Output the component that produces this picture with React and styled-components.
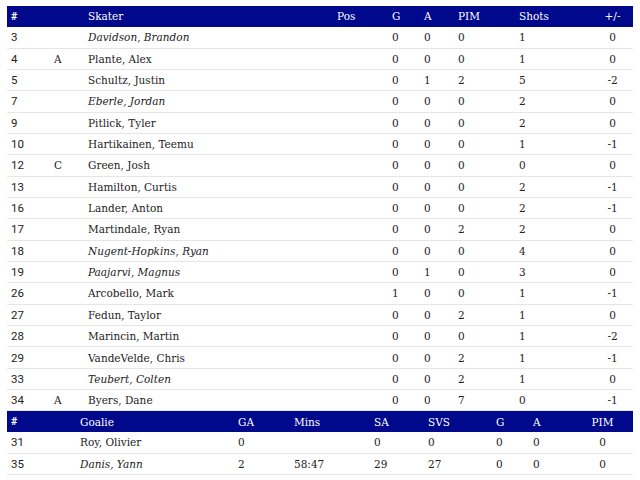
import React from "react";
import styled, { createGlobalStyle } from "styled-components";

const GlobalStyle = createGlobalStyle`
  body {
    margin: 0;
    padding: 6px 7px;
    background: #fff;
    font-family: "DejaVu Serif", "Liberation Serif", serif;
    color: #222;
  }
  th, td {
    box-sizing: border-box;
  }
`;

const Table = styled.table`
  width: 626px;
  border-collapse: collapse;
  table-layout: fixed;
  font-size: 10.5px;
`;

const HeadRow = styled.tr`
  background: #00088c;
  color: #fff;
  height: 20.7px;
`;

const Th = styled.th`
  font-weight: normal;
  text-align: ${(p) => (p.center ? "center" : "left")};
  padding: ${(p) => (p.center ? "0" : "0 0 0 4px")};
  width: ${(p) => p.w}px;
  white-space: nowrap;
`;

const Row = styled.tr`
  height: 21.35px;
  border-bottom: 1px solid #e6e6e6;
`;

const Td = styled.td`
  padding: ${(p) => (p.center ? "0" : "0 0 0 4px")};
  text-align: ${(p) => (p.center ? "center" : "left")};
  font-style: ${(p) => (p.italic ? "italic" : "normal")};
  white-space: nowrap;
`;

const Num = styled(Td)`
  font-family: Roboto, "Liberation Sans", sans-serif;
  font-size: 11.5px;
`;

const HashTh = styled(Th)`
  font-family: Roboto, "Liberation Sans", sans-serif;
  font-weight: bold;
`;

const skaters = [
  ["3", "", "Davidson, Brandon", true, 0, 0, 0, 1, 0],
  ["4", "A", "Plante, Alex", false, 0, 0, 0, 1, 0],
  ["5", "", "Schultz, Justin", false, 0, 1, 2, 5, -2],
  ["7", "", "Eberle, Jordan", true, 0, 0, 0, 2, 0],
  ["9", "", "Pitlick, Tyler", false, 0, 0, 0, 2, 0],
  ["10", "", "Hartikainen, Teemu", false, 0, 0, 0, 1, -1],
  ["12", "C", "Green, Josh", false, 0, 0, 0, 0, 0],
  ["13", "", "Hamilton, Curtis", false, 0, 0, 0, 2, -1],
  ["16", "", "Lander, Anton", false, 0, 0, 0, 2, -1],
  ["17", "", "Martindale, Ryan", false, 0, 0, 2, 2, 0],
  ["18", "", "Nugent-Hopkins, Ryan", true, 0, 0, 0, 4, 0],
  ["19", "", "Paajarvi, Magnus", true, 0, 1, 0, 3, 0],
  ["26", "", "Arcobello, Mark", false, 1, 0, 0, 1, -1],
  ["27", "", "Fedun, Taylor", false, 0, 0, 2, 1, 0],
  ["28", "", "Marincin, Martin", false, 0, 0, 0, 1, -2],
  ["29", "", "VandeVelde, Chris", false, 0, 0, 2, 1, -1],
  ["33", "", "Teubert, Colten", true, 0, 0, 2, 1, 0],
  ["34", "A", "Byers, Dane", false, 0, 0, 7, 0, -1],
];

const goalies = [
  ["31", "Roy, Olivier", false, "0", "", "0", "0", "0", "0", "0"],
  ["35", "Danis, Yann", true, "2", "58:47", "29", "27", "0", "0", "0"],
];

export default function App() {
  return (
    <>
      <GlobalStyle />
      <Table>
        <thead>
          <HeadRow>
            <HashTh w={43}>#</HashTh>
            <Th w={34}></Th>
            <Th w={249}>Skater</Th>
            <Th w={55}>Pos</Th>
            <Th w={32}>G</Th>
            <Th w={34}>A</Th>
            <Th w={61}>PIM</Th>
            <Th w={77}>Shots</Th>
            <Th w={41} center>+/-</Th>
          </HeadRow>
        </thead>
        <tbody>
          {skaters.map((s) => (
            <Row key={s[0]}>
              <Num>{s[0]}</Num>
              <Td>{s[1]}</Td>
              <Td italic={s[3]}>{s[2]}</Td>
              <Td></Td>
              <Td>{s[4]}</Td>
              <Td>{s[5]}</Td>
              <Td>{s[6]}</Td>
              <Td>{s[7]}</Td>
              <Td center>{s[8]}</Td>
            </Row>
          ))}
        </tbody>
      </Table>
      <Table>
        <thead>
          <HeadRow>
            <HashTh w={69}>#</HashTh>
            <Th w={158}>Goalie</Th>
            <Th w={56}>GA</Th>
            <Th w={80}>Mins</Th>
            <Th w={54}>SA</Th>
            <Th w={68}>SVS</Th>
            <Th w={37}>G</Th>
            <Th w={43}>A</Th>
            <Th w={61} center>PIM</Th>
          </HeadRow>
        </thead>
        <tbody>
          {goalies.map((g) => (
            <Row key={g[0]}>
              <Num>{g[0]}</Num>
              <Td italic={g[2]}>{g[1]}</Td>
              <Td>{g[3]}</Td>
              <Td>{g[4]}</Td>
              <Td>{g[5]}</Td>
              <Td>{g[6]}</Td>
              <Td>{g[7]}</Td>
              <Td>{g[8]}</Td>
              <Td center>{g[9]}</Td>
            </Row>
          ))}
        </tbody>
      </Table>
    </>
  );
}
